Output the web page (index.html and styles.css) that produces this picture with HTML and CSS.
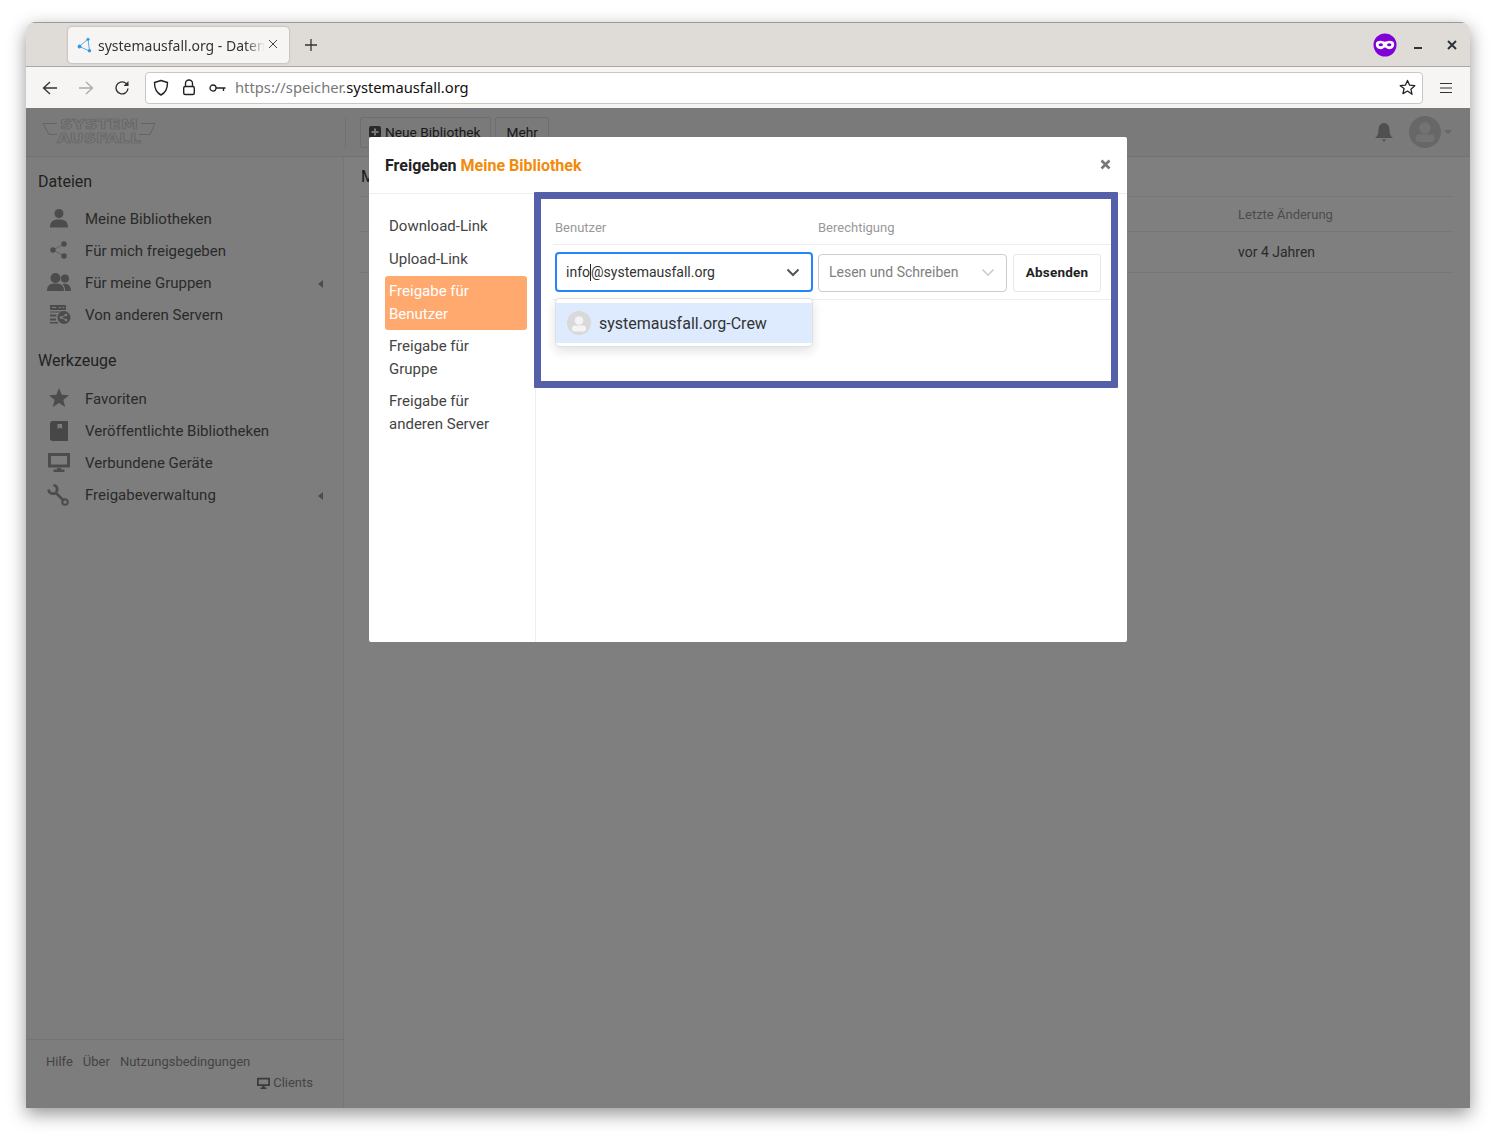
FILE: index.html
```html
<!DOCTYPE html>
<html lang="de">
<head>
<meta charset="utf-8">
<title>systemausfall.org - Daten</title>
<link rel="stylesheet" href="styles.css">
</head>
<body>
<div class="window">
  <div class="tabbar">
    <div class="tab">
      <svg class="favicon" width="16" height="16" viewBox="0 0 16 16"><path d="M11 2 2.500 9.500 12.500 14 Z" fill="none" stroke="#2f9be6" stroke-width=".8"/><circle cx="11" cy="2.200" r="1.500" fill="#2f9be6"/><circle cx="2.500" cy="9.500" r="1.900" fill="#2f9be6"/><circle cx="12.500" cy="13.800" r="1.700" fill="#2f9be6"/></svg>
      <span class="tab-title">systemausfall.org - Daten</span>
      <svg class="tab-close" width="10" height="10" viewBox="0 0 10 10"><path d="M1 1l8 8M9 1l-8 8" stroke="#444" stroke-width="1" fill="none"/></svg>
    </div>
    <svg class="newtab" width="14" height="14" viewBox="0 0 14 14"><path d="M7 1v12M1 7h12" stroke="#333" stroke-width="1.300" fill="none"/></svg>
    <div class="tabbar-right">
      <svg class="mask" width="24" height="24" viewBox="0 0 24 24"><circle cx="12" cy="12" r="11.500" fill="#8000d7"/><path d="M2.800 11c0-2.300 2.200-3.200 4.700-3.200 2 0 3 1 4.500 1s2.500-1 4.500-1c2.500 0 4.700.9 4.700 3.200 0 3.400-2.200 5.200-4.700 5.200-2.200 0-3-1.800-4.500-1.800s-2.300 1.800-4.500 1.800c-2.500 0-4.700-1.800-4.700-5.200z" fill="#fff"/><ellipse cx="7.800" cy="11.700" rx="2.200" ry="1.500" fill="#8000d7"/><ellipse cx="16.200" cy="11.700" rx="2.200" ry="1.500" fill="#8000d7"/></svg>
      <svg class="win-min" width="10" height="10" viewBox="0 0 10 10"><path d="M1 8h8" stroke="#2e3436" stroke-width="2"/></svg>
      <svg class="win-close" width="10" height="10" viewBox="0 0 10 10"><path d="M1 1l8 8M9 1l-8 8" stroke="#2e3436" stroke-width="2"/></svg>
    </div>
  </div>
  <div class="toolbar">
    <svg class="nav-icon" width="16" height="16" viewBox="0 0 16 16"><path d="M15 8H2M8 2 1.500 8 8 14" fill="none" stroke="#333" stroke-width="1.300"/></svg>
    <svg class="nav-icon" width="16" height="16" viewBox="0 0 16 16"><path d="M1 8h13M8 2l6.500 6L8 14" fill="none" stroke="#aaa" stroke-width="1.300"/></svg>
    <svg class="nav-icon" width="16" height="16" viewBox="0 0 16 16"><path d="M14 8.500A6 6 0 1 1 11.500 3L14 5" fill="none" stroke="#333" stroke-width="1.400"/><path d="M14.500 1v5h-5z" fill="#333"/></svg>
    <div class="urlbar">
      <svg width="16" height="17" viewBox="0 0 16 17"><path d="M8 1.500 14.500 3.500C14.500 10 13 13.500 8 16 3 13.500 1.500 10 1.500 3.500Z" fill="none" stroke="#222" stroke-width="1.400" stroke-linejoin="round"/></svg>
      <svg class="lock" width="14" height="17" viewBox="0 0 14 17"><path d="M3.500 7V4.500a3.500 3.500 0 0 1 7 0V7" fill="none" stroke="#222" stroke-width="1.400"/><rect x="1.700" y="7.500" width="10.600" height="8" rx="1.500" fill="none" stroke="#222" stroke-width="1.400"/></svg>
      <svg class="key" width="17" height="10" viewBox="0 0 17 10"><circle cx="4" cy="5" r="3" fill="none" stroke="#222" stroke-width="1.300"/><path d="M7 5h9.500M14.500 5v3" fill="none" stroke="#222" stroke-width="1.300"/></svg>
      <span class="url"><span class="url-dim">https://speicher.</span>systemausfall.org</span>
      <svg class="star" width="17" height="17" viewBox="0 0 24 24"><path d="M12 2l3 6.800 7.300.7-5.500 4.900 1.600 7.200L12 17l-6.400 3.600 1.600-7.200L1.700 9.500 9 8.800z" fill="none" stroke="#222" stroke-width="1.800" stroke-linejoin="round"/></svg>
    </div>
    <svg class="menu" width="14" height="12" viewBox="0 0 14 12"><path d="M1 1.500h12M1 6h12M1 10.500h12" stroke="#333" stroke-width="1.100"/></svg>
  </div>

  <div class="app">
    <header class="topbar">
      <div class="logo-cell">
        <svg class="logo" width="114" height="32" viewBox="0 0 114 32"><path d="M1 8.500H15M1 8.500l6 11H15M113 8.500H99M113 8.500l-5 11H97" fill="none" stroke="#c8c8c8" stroke-width="1"/><text class="logo-text" x="57" y="13.500" text-anchor="middle" textLength="78" lengthAdjust="spacingAndGlyphs">SYSTEM</text><text class="logo-text" x="57" y="28" text-anchor="middle" textLength="84" lengthAdjust="spacingAndGlyphs">AUSFALL</text></svg>
      </div>
      <div class="top-actions">
        <button class="btn"><svg width="12" height="12" viewBox="0 0 12 12"><rect width="12" height="12" rx="2" fill="#555"/><path d="M6 2.500v7M2.500 6h7" stroke="#eee" stroke-width="2"/></svg>Neue Bibliothek</button>
        <button class="btn">Mehr</button>
      </div>
      <div class="top-right">
        <svg width="20" height="22" viewBox="0 0 20 22"><path d="M10 1c3.500 0 5.500 3 5.500 6.500 0 4 .8 6.500 3.500 8.500H1c2.700-2 3.500-4.500 3.500-8.500C4.500 4 6.500 1 10 1z" fill="#a0a0a0" transform="translate(0 1)"/><path d="M8 18.500h4L10 21z" fill="#a0a0a0"/></svg>
        <svg class="avatar" width="32" height="32" viewBox="0 0 32 32"><circle cx="16" cy="16" r="16" fill="#cfcfcf"/><circle cx="16" cy="12" r="5.700" fill="#e6e6e6"/><rect x="6.500" y="18.500" width="19" height="7.500" rx="3.700" fill="#e6e6e6"/></svg>
        <span class="caret"></span>
      </div>
    </header>
    <div class="app-body">
      <aside class="sidebar">
        <div class="side-main">
          <h3 class="side-title">Dateien</h3>
          <ul class="side-list">
            <li><svg width="20" height="20" viewBox="0 0 20 20"><circle cx="10" cy="5.500" r="4.500" fill="#999"/><path d="M1 19.500c0-5.500 2.500-8 9-8s9 2.500 9 8z" fill="#999"/></svg><span>Meine Bibliotheken</span></li>
            <li><svg width="20" height="20" viewBox="0 0 20 20"><path d="M4 10l11-6M4 10l11 6" stroke="#aaa" stroke-width=".7"/><circle cx="4" cy="10" r="2.700" fill="#999"/><circle cx="15" cy="4" r="2.800" fill="#999"/><circle cx="15" cy="16" r="2.800" fill="#999"/></svg><span>Für mich freigegeben</span></li>
            <li class="has-arrow"><svg class="wide" width="24" height="20" viewBox="0 0 24 20"><circle cx="8.500" cy="6" r="5" fill="#999"/><path d="M0 19c0-5 2-7.500 8.500-7.500S17 14 17 19z" fill="#999"/><circle cx="18" cy="6.500" r="4" fill="#999"/><path d="M18 19c0-3-.5-5-2.500-7 5-1 8.500 1 8.500 7z" fill="#999"/></svg><span>Für meine Gruppen</span><i class="arrow"></i></li>
            <li><svg width="22" height="20" viewBox="0 0 22 20"><path d="M1 1h16v5H1zM1 7.500h16v1H1zM1 10.500h6.500v2H1zM1 14.500h6v2H1zM1 18h8v1.500H1z" fill="#999"/><path d="M3 3h4v1H3zM10 3h2v1h-2zM13.500 3h2v1h-2z" fill="#fbfbfb"/><circle cx="15" cy="13.500" r="6.500" fill="#999"/><path d="M12 13.500l5-2.500M12 13.500l5 2.500" stroke="#fff" stroke-width="1"/><circle cx="12" cy="13.500" r="1.300" fill="#fff"/><circle cx="17" cy="11" r="1.300" fill="#fff"/><circle cx="17" cy="16" r="1.300" fill="#fff"/></svg><span>Von anderen Servern</span></li>
          </ul>
          <h3 class="side-title second">Werkzeuge</h3>
          <ul class="side-list">
            <li><svg width="20" height="20" viewBox="0 0 20 20"><path d="M10 0l2.700 6.800 7.300.5-5.600 4.600 1.800 7.100L10 15.100 3.800 19l1.800-7.100L0 7.300l7.300-.5z" fill="#999"/></svg><span>Favoriten</span></li>
            <li><svg width="20" height="22" viewBox="0 0 20 22"><path d="M3 1h16v3H8.500v5l2.300-1.500L13 9V4h6v17H3a2.500 2.500 0 0 1-2-2V3a2.500 2.500 0 0 1 2-2z" fill="#8f8f8f"/></svg><span>Veröffentlichte Bibliotheken</span></li>
            <li><svg class="monitor" width="22" height="20" viewBox="0 0 22 20"><path d="M0 1h22v14.500H0zM3 4v8.500h16V4zM9 15h4v2.500h3.500V20h-11v-2.500H9z" fill="#999" fill-rule="evenodd"/></svg><span>Verbundene Geräte</span></li>
            <li class="has-arrow"><svg class="wide" width="22" height="22" viewBox="0 0 22 22"><path d="M1.500 5.500C2 9.500 5.500 10.500 8.500 9M6.500 1.200C10.500 1.800 11 5.500 9 8.500M8.500 8.500 17 17" fill="none" stroke="#999" stroke-width="2.800"/><circle cx="18" cy="18" r="2.800" fill="none" stroke="#999" stroke-width="2"/></svg><span>Freigabeverwaltung</span><i class="arrow"></i></li>
          </ul>
        </div>
        <footer class="side-foot">
          <div class="foot-links"><a>Hilfe</a><a>Über</a><a>Nutzungsbedingungen</a></div>
          <div class="foot-clients"><svg width="13" height="12" viewBox="0 0 22 20"><path d="M0 1h22v14H0zM3 4v8h16V4zM9 15h4v2.500h3V20H6v-2.500h3z" fill="#777" fill-rule="evenodd"/></svg>Clients</div>
        </footer>
      </aside>
      <main class="main">
        <h2 class="main-title">Meine Bibliotheken</h2>
        <div class="table-head"><span>Letzte Änderung</span></div>
        <div class="table-row"><span>vor 4 Jahren</span></div>
      </main>
    </div>

    <div class="overlay"></div>
    <section class="modal">
      <div class="modal-head">
        <h4 class="modal-title">Freigeben <span class="modal-name">Meine Bibliothek</span></h4>
        <svg class="modal-close" width="11" height="11" viewBox="0 0 11 11"><path d="M1.500 1.500l8 8M9.500 1.500l-8 8" stroke="#777" stroke-width="2.600"/></svg>
      </div>
      <div class="modal-body">
        <ul class="modal-nav">
          <li>Download-Link</li>
          <li>Upload-Link</li>
          <li class="two active">Freigabe für Benutzer</li>
          <li class="two">Freigabe für Gruppe</li>
          <li class="two">Freigabe für anderen Server</li>
        </ul>
        <div class="modal-content">
          <div class="share-grid share-labels"><span>Benutzer</span><span>Berechtigung</span></div>
          <div class="share-grid share-row">
            <div class="field focus"><span class="value">info<i class="cursor"></i>@systemausfall.org</span><svg width="14" height="9" viewBox="0 0 14 9"><path d="M1.500 1.500 7 7l5.500-5.500" fill="none" stroke="#555" stroke-width="2"/></svg></div>
            <div class="field"><span class="placeholder">Lesen und Schreiben</span><svg width="14" height="9" viewBox="0 0 14 9"><path d="M1.500 1.500 7 7l5.500-5.500" fill="none" stroke="#ccc" stroke-width="1.600"/></svg></div>
            <button class="submit">Absenden</button>
          </div>
          <div class="dropdown">
            <div class="option">
              <svg width="24" height="24" viewBox="0 0 24 24"><circle cx="12" cy="12" r="12" fill="#d9d9d9"/><circle cx="12" cy="9.500" r="4.300" fill="#f4f4f4"/><rect x="5" y="14.500" width="14" height="6" rx="3" fill="#f4f4f4"/></svg>
              <span>systemausfall.org-Crew</span>
            </div>
          </div>
        </div>
      </div>
      <div class="annotation"></div>
    </section>
  </div>
</div>
</body>
</html>
```

FILE: styles.css
```css
* { box-sizing: border-box; }
html, body { margin: 0; height: 100%; }
body { background: #fff; padding: 22px 26px 29px; font-family: Roboto, "Liberation Sans", sans-serif; color: #555; overflow: hidden; }
ul { list-style: none; margin: 0; padding: 0; }
h2, h3, h4 { margin: 0; font-weight: 400; }

.window { height: 1086px; display: flex; flex-direction: column; border-radius: 9px 9px 0 0; overflow: hidden; box-shadow: 0 6px 18px rgba(0,0,0,.42); }

.tabbar { height: 45px; flex: none; background: #dfdcd8; border-top: 1px solid #9b9b9b; border-bottom: 1px solid #a8a8a6; display: flex; align-items: center; padding-left: 42px; }
.tab { width: 221px; height: 36px; margin-top: 1px; background: #f6f5f4; border-radius: 4px; box-shadow: 0 0 2px rgba(0,0,0,.35); display: flex; align-items: center; padding-left: 9px; }
.favicon { flex: none; margin-right: 5px; }
.tab-title { width: 167px; white-space: nowrap; overflow: hidden; font: 14px "Noto Sans", sans-serif; color: #333; -webkit-mask-image: linear-gradient(90deg, #000 88%, transparent 100%); mask-image: linear-gradient(90deg, #000 88%, transparent 100%); }
.tab-close { margin-left: 3px; margin-top: -2px; }
.newtab { margin-left: 15px; }
.tabbar-right { margin-left: auto; display: flex; align-items: center; padding-right: 13px; }
.mask { margin-right: 16px; }
.win-min { margin-right: 24px; }

.toolbar { height: 41px; flex: none; background: #f6f5f4; display: flex; align-items: center; padding: 0 17px 0 16px; }
.nav-icon { margin-right: 20px; }
.nav-icon:nth-child(3) { margin-right: 15px; }
.urlbar { flex: 1; height: 32px; background: #fff; border: 1px solid #c9c6c2; border-radius: 4px; display: flex; align-items: center; padding: 0 7px; }
.lock { margin-left: 13px; }
.key { margin-left: 13px; }
.url { margin-left: 9px; margin-top: -2px; font: 14.750px "Noto Sans", sans-serif; color: #111; }
.url-dim { color: #777; }
.star { margin-left: auto; margin-right: -1px; }
.menu { margin-left: 16px; }

.app { flex: 1; position: relative; background: #fff; display: flex; flex-direction: column; min-height: 0; }
.topbar { height: 49px; flex: none; background: #f4f4f4; border-bottom: 1px solid #e4e4e4; display: flex; align-items: center; }
.logo-cell { width: 319px; padding-left: 16px; display: flex; }
.logo { margin-top: -3px; }
.logo-text { font: 700 14px "DejaVu Sans", sans-serif; fill: none; stroke: #c8c8c8; stroke-width: .7px; }
.top-actions { display: flex; gap: 4px; align-self: flex-start; margin-top: 9px; padding-left: 14px; height: 31px; border-left: 1px solid #e0e0e0; }
.btn { height: 31px; padding: 0 10px 2px; background: #f4f4f4; border: 1px solid #ddd; border-radius: 2px; font: 13.700px Roboto, sans-serif; color: #333; display: flex; align-items: center; gap: 4px; }
.btn svg { margin-left: -2px; }
.top-right { margin-left: auto; display: flex; align-items: center; gap: 15px; padding-right: 18px; }
.caret { width: 0; height: 0; border: 4.500px solid transparent; border-top-color: #ccc; border-bottom: 0; margin-left: -12px; }

.app-body { flex: 1; display: flex; min-height: 0; }
.sidebar { width: 318px; flex: none; border-right: 1px solid #ececec; background: #fbfbfb; display: flex; flex-direction: column; }
.side-main { flex: 1; padding: 14px 12px 0; }
.side-title { font-size: 16px; line-height: 22px; color: #444; }
.side-title.second { margin-top: 19px; padding-bottom: 1px; }
.side-list { margin-top: 10px; }
.side-list li { height: 32px; display: flex; align-items: center; padding-left: 11px; position: relative; font-size: 15px; color: #555; }
.side-list li svg { position: absolute; left: 11px; top: 5px; }
.side-list li svg.wide { left: 9px; }
.side-list li svg.monitor { left: 10px; }
.side-list span { margin-left: 36px; }
.arrow { width: 0; height: 0; border: 4.500px solid transparent; border-right: 5px solid #999; border-left: 0; margin-left: auto; margin-right: 8px; margin-top: 2px; }
.side-foot { height: 69px; border-top: 1px solid #e8e8e8; padding: 14px 30px 0 20px; font-size: 13px; color: #888; }
.foot-links { display: flex; gap: 10px; line-height: 16px; }
.foot-clients { display: flex; justify-content: flex-end; align-items: center; gap: 3px; margin-top: 5px; line-height: 16px; }

.main { flex: 1; padding: 9px 16px 0; min-width: 0; }
.main-title { font-size: 16px; line-height: 22px; color: #333; padding-left: 1px; padding-bottom: 8px; border-bottom: 1px solid #eee; }
.table-head { height: 35px; border-bottom: 1px solid #eee; display: flex; align-items: center; padding-left: 878px; font-size: 13px; color: #999; }
.table-row { height: 41px; border-bottom: 1px solid #eee; display: flex; align-items: center; padding-left: 878px; font-size: 14px; color: #555; }

.overlay { position: absolute; inset: 0; background: rgba(0,0,0,.5); }
.modal { position: absolute; left: 343px; top: 29px; width: 758px; height: 505px; background: #fff; border-radius: 2px; display: flex; flex-direction: column; color: #333; }
.modal-head { height: 57px; flex: none; border-bottom: 1px solid #eee; display: flex; align-items: center; justify-content: space-between; padding: 0 16px 0 16px; }
.modal-title { font-size: 16px; font-weight: 700; color: #222; }
.modal-name { color: #f28a0a; }
.modal-close { margin-top: -2px; }
.modal-body { flex: 1; display: flex; min-height: 0; }
.modal-nav { width: 167px; flex: none; border-right: 1px solid #eee; padding: 16px 8px 0 16px; font-size: 15px; line-height: 22.860px; color: #444; }
.modal-nav li { padding: 5px 12px 5px 4px; border-radius: 3px; }
.modal-nav li.two { padding-top: 4.500px; padding-bottom: 4.500px; }
.modal-nav li.active { background: #ffa96e; color: #fff; }
.modal-content { flex: 1; position: relative; padding: 0 16px 0 17px; }
.share-grid { display: grid; grid-template-columns: 263px 195px 88px; }
.share-labels { height: 51px; padding: 26px 2px 0; border-bottom: 1px solid #eee; font-size: 13px; line-height: 15px; color: #999; grid-template-columns: 263px 1fr; }
.share-row { height: 55px; padding: 7px 0 0 2px; border-bottom: 1px solid #eee; }
.field { height: 38px; width: 189px; margin-top: 2px; border: 1px solid #ccc; border-radius: 4px; display: flex; align-items: center; justify-content: space-between; padding: 0 11px 2px 10px; font-size: 14px; }
.field.focus { width: 258px; height: 40px; margin-top: 0; border: 2px solid #2684ff; padding: 0 11px 0 9px; color: #333; }
.value { position: relative; }
.cursor { display: inline-block; width: 0; height: 17px; border-left: 1px solid #222; vertical-align: -4px; }
.placeholder { color: #808080; }
.submit { width: 88px; height: 38px; margin-top: 2px; background: #fff; border: 1px solid #e6e6e6; border-radius: 3px; font: 700 13.500px Roboto, sans-serif; letter-spacing: .2px; color: #222; padding: 0 0 2px; }
.dropdown { position: absolute; left: 19px; top: 104px; width: 258px; height: 49px; background: #fff; border: 1px solid #e0e0e0; border-radius: 4px; padding-top: 4px; box-shadow: 0 4px 11px rgba(0,0,0,.12); }
.option { height: 40px; background: #deebff; display: flex; align-items: center; gap: 8px; padding-left: 11px; font-size: 16px; color: #333; }
.annotation { position: absolute; left: 165px; top: 55px; width: 584px; height: 196px; border: 7px solid #5560a8; border-radius: 1px; }
```
